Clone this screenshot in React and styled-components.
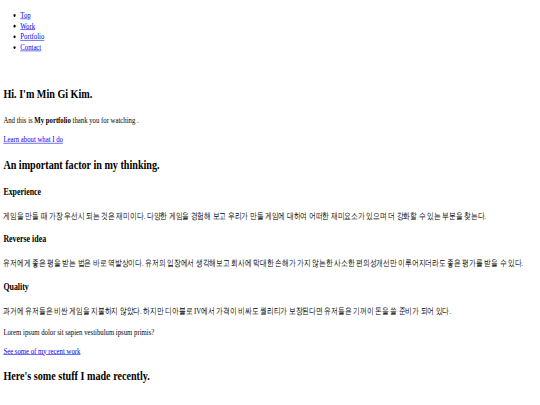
import React from 'react';
import styled, { createGlobalStyle } from 'styled-components';

const GlobalStyle = createGlobalStyle`
  html, body {
    margin: 0;
    padding: 0;
    background: #ffffff;
    overflow: hidden;
  }
`;

// the page is laid out at 1280x720 and shown squeezed into the 540x405 window
const Page = styled.div`
  width: 1280px;
  padding: 0 8px;
  box-sizing: border-box;
  transform: scale(0.421875, 0.5625);
  transform-origin: 0 0;
  font-family: "Liberation Serif", serif;
  font-size: 16px;
  color: #000;
  display: flow-root;
`;

const Nav = styled.ul`
  margin: 17px 0 16px;
  padding-left: 40px;
  list-style: disc;
`;

const NavItem = styled.li`
  line-height: 19px;
`;

const Link = styled.a`
  color: #0000ee;
  text-decoration: underline;
`;

const Section = styled.section`
  padding-top: ${(p) => p.$top || 0}px;
`;

const Title = styled.h2`
  font-size: 24px;
  font-weight: bold;
  margin: 22px 0 ${(p) => p.$bottom || 22}px;
`;

const SubTitle = styled.h3`
  font-size: 18.72px;
  font-weight: bold;
  margin: 18.72px 0;
`;

const Text = styled.p`
  margin: 16px 0;
  line-height: ${(p) => (p.$tall ? '25px' : 'normal')};
`;

const ideas = [
  {
    title: 'Experience',
    text: '게임을 만들 때 가장 우선시 되는 것은 재미이다. 다양한 게임을 경험해 보고 우리가 만들 게임에 대하여 어떠한 재미요소가 있으며 더 강화할 수 있는 부분을 찾는다.',
  },
  {
    title: 'Reverse idea',
    text: '유저에게 좋은 평을 받는 법은 바로 역발상이다. 유저의 입장에서 생각해보고 회사에 막대한 손해가 가지 않는한 사소한 편의성개선만 이루어지더라도 좋은 평가를 받을 수 있다.',
  },
  {
    title: 'Quality',
    text: '과거에 유저들은 비싼 게임을 지불하지 않았다. 하지만 디아블로 IV에서 가격이 비싸도 퀄리티가 보장된다면 유저들은 기꺼이 돈을 쓸 준비가 되어 있다.',
  },
];

export default function App() {
  return (
    <>
      <GlobalStyle />
      <Page>
        <Nav>
          <NavItem><Link href="#top">Top</Link></NavItem>
          <NavItem><Link href="#work">Work</Link></NavItem>
          <NavItem><Link href="#portfolio">Portfolio</Link></NavItem>
          <NavItem><Link href="#contact">Contact</Link></NavItem>
        </Nav>

        <Section $top={22}>
          <Title as="h1" $bottom={25}>Hi. I'm Min Gi Kim.</Title>
          <Text>
            And this is <b>My portfolio</b> thank you for watching .
          </Text>
          <Link href="#work">Learn about what I do</Link>
        </Section>

        <Section id="work">
          <Title $bottom={24}>An important factor in my thinking.</Title>
          {ideas.map((idea) => (
            <React.Fragment key={idea.title}>
              <SubTitle>{idea.title}</SubTitle>
              <Text $tall>{idea.text}</Text>
            </React.Fragment>
          ))}
          <Text>Lorem ipsum dolor sit sapien vestibulum ipsum primis?</Text>
          <Link href="#portfolio">See some of my recent work</Link>
        </Section>

        <Section id="portfolio">
          <Title>Here's some stuff I made recently.</Title>
        </Section>
      </Page>
    </>
  );
}
